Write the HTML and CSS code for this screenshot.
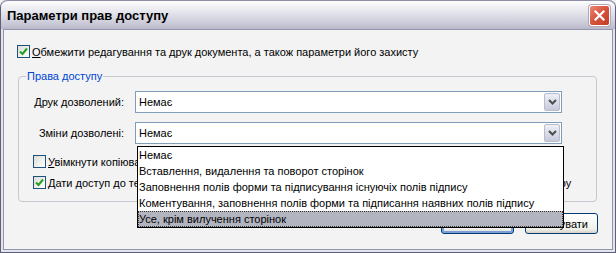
FILE: index.html
```html
<html>
  <head>
    <meta charset="utf-8">
    <link rel="stylesheet" href="styles.css">
  </head>
  <body>
    <div class="window">
      <div class="titlebar">
        <span class="title">Параметри прав доступу</span>
        <span class="close-btn">
          <svg width="11" height="11" viewBox="0 0 11 11"><path d="M1.5 1.5 L9.5 9.5 M9.5 1.5 L1.5 9.5" stroke="#fff" stroke-width="2.2" stroke-linecap="square"/></svg>
        </span>
      </div>
      <div class="dialog-body">
        <div class="check-row top-check">
          <span class="checkbox checked"><svg width="9" height="9" viewBox="0 0 9 9"><path d="M1 4.5 L3.5 7 L8 1.5" fill="none" stroke="#21a121" stroke-width="2"/></svg></span>
          <span><u>О</u>бмежити редагування та друк документа, а також параметри його захисту</span>
        </div>

        <div class="group">
          <span class="group-title">Права доступу</span>
          <div class="field-row">
            <label><u>Д</u>рук дозволений:</label>
            <div class="select">
              <span class="select-value">Немає</span>
              <span class="select-btn"><svg width="9" height="6" viewBox="0 0 9 6"><path d="M1 1 L4.5 4.5 L8 1" fill="none" stroke="#4d4d4d" stroke-width="2"/></svg></span>
            </div>
          </div>
          <div class="field-row">
            <label>Зміни дозволені:</label>
            <div class="select">
              <span class="select-value">Немає</span>
              <span class="select-btn"><svg width="9" height="6" viewBox="0 0 9 6"><path d="M1 1 L4.5 4.5 L8 1" fill="none" stroke="#4d4d4d" stroke-width="2"/></svg></span>
            </div>
          </div>
          <div class="check-row">
            <span class="checkbox"></span>
            <span><u>У</u>вімкнути копіювання тексту, зображень та іншого вмісту</span>
          </div>
          <div class="check-row">
            <span class="checkbox checked"><svg width="9" height="9" viewBox="0 0 9 9"><path d="M1 4.5 L3.5 7 L8 1.5" fill="none" stroke="#21a121" stroke-width="2"/></svg></span>
            <span>Дати доступ до тексту для пристроїв читання з екрана, що призначені для людей з порушеннями зору</span>
          </div>
        </div>

        <div class="buttons">
          <span class="btn default">OK</span>
          <span class="btn">Скасувати</span>
        </div>
      </div>

      <div class="dropdown-list">
        <div class="option">Немає</div>
        <div class="option">Вставлення, видалення та поворот сторінок</div>
        <div class="option">Заповнення полів форми та підписування існуючіх полів підпису</div>
        <div class="option">Коментування, заповнення полів форми та підписання наявних полів підпису</div>
        <div class="option selected">Усе, крім вилучення сторінок</div>
      </div>
    </div>
  </body>
</html>
```

FILE: styles.css
```css
body {
  margin: 0;
  background: #f3f3f3;
  font-family: "Liberation Sans", Arial, sans-serif;
  font-size: 11px;
  color: #000;
}

.window {
  position: relative;
  width: 616px;
  height: 253px;
  box-sizing: border-box;
  background: #e4e4ec;
  border: 1px solid #5f5f7c;
  border-top: none;
  border-radius: 7px 7px 0 0;
  padding: 0 2px 2px 2px;
  display: flex;
  flex-direction: column;
}

.titlebar {
  height: 29px;
  margin: 0 -2px;
  border-radius: 7px 7px 0 0;
  border-top: 1px solid #8d8da6;
  box-sizing: border-box;
  background: linear-gradient(#fefefe 0%, #eeeef3 25%, #d8d8e3 60%, #c6c6d5 85%, #b8b8ca 100%);
  display: flex;
  align-items: center;
  justify-content: space-between;
  padding: 0 5px 0 6px;
}

.title {
  font-family: "Liberation Sans", Arial, sans-serif;
  font-weight: bold;
  font-size: 13px;
  color: #000;
}

.close-btn {
  width: 21px;
  height: 21px;
  box-sizing: border-box;
  border: 1px solid #fff;
  border-radius: 3px;
  background: linear-gradient(135deg, #e98978 0%, #d9573f 45%, #c03a22 100%);
  box-shadow: 0 0 0 1px #b0a8b8;
  display: flex;
  align-items: center;
  justify-content: center;
}

.dialog-body {
  flex: 1;
  background: #f3f3f3;
  border: 1px solid #9595ad;
  display: flex;
  flex-direction: column;
  padding: 0 14px 0 13px;
}

.check-row {
  display: flex;
  align-items: center;
  gap: 2px;
  height: 21px;
  white-space: nowrap;
}

.top-check {
  margin-top: 11px;
}

.checkbox {
  width: 13px;
  height: 13px;
  box-sizing: border-box;
  border: 1px solid #1c5180;
  background: linear-gradient(135deg, #dcdcd6 0%, #f2f2ee 60%, #ffffff 100%);
  display: flex;
  align-items: center;
  justify-content: center;
  flex: none;
}

.group {
  margin: 14px 1px 0 1px;
  padding: 1px 14px 0 14px;
  border: 1px solid #c8c6cf;
  border-radius: 4px;
  height: 126px;
  box-sizing: border-box;
  display: flex;
  flex-direction: column;
}

.group-title {
  align-self: flex-start;
  color: #0046d5;
  background: #f3f3f3;
  line-height: 13px;
  padding: 0 1px;
  margin: -8px 0 0 -7px;
}

.field-row {
  display: flex;
  align-items: center;
  height: 22px;
  margin-top: 8px;
}

.field-row + .field-row {
  margin-top: 9px;
}

.field-row + .check-row {
  margin-top: 7px;
}

.field-row label {
  width: 91px;
  text-align: right;
  padding-right: 11px;
}

.select {
  width: 427px;
  height: 22px;
  box-sizing: border-box;
  border: 1px solid #7f9db9;
  background: #fff;
  display: flex;
  align-items: center;
  justify-content: space-between;
  padding: 0 1px 0 3px;
}

.select-btn {
  width: 16px;
  height: 18px;
  box-sizing: border-box;
  border: 1px solid #b8bcd0;
  border-radius: 2px;
  background: linear-gradient(#eef0f6, #c8cadb);
  display: flex;
  align-items: center;
  justify-content: center;
}

.buttons {
  display: flex;
  justify-content: flex-end;
  gap: 11px;
  margin-top: 11px;
}

.btn {
  width: 73px;
  height: 21px;
  box-sizing: border-box;
  border: 1px solid #003c74;
  border-radius: 3px;
  background: linear-gradient(#ffffff, #f0f0ea 80%, #d6d0c5);
  display: flex;
  align-items: center;
  justify-content: center;
}

.btn.default {
  box-shadow: inset 0 0 0 2px #7d9fd9;
}

.dropdown-list {
  position: absolute;
  left: 136px;
  top: 146px;
  width: 427px;
  box-sizing: border-box;
  border: 1px solid #000;
  background: #fff;
}

.option {
  height: 16px;
  line-height: 16px;
  padding-left: 1px;
  white-space: nowrap;
}

.option.selected {
  background: #b2b4bf;
  outline: 1px dotted #333;
  outline-offset: -1px;
}
```
